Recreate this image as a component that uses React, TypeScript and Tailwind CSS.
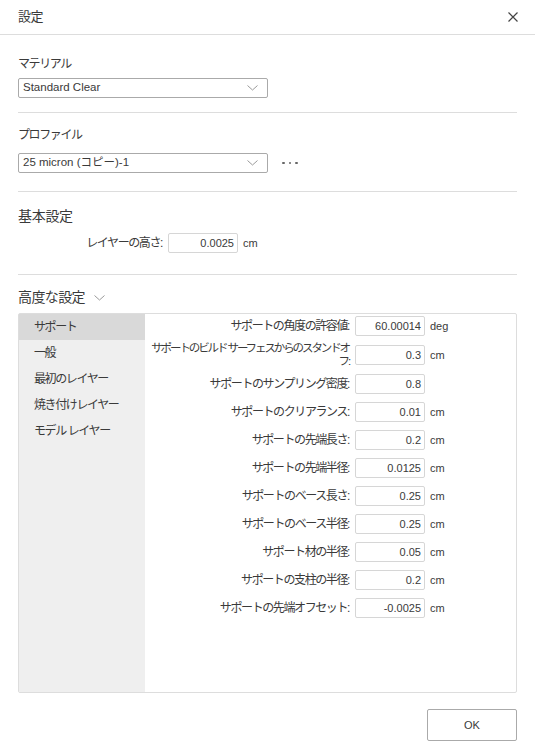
import React from 'react'

const jp = 'text-[12px] tracking-[-1.4px]'

function Chevron({ className = '' }: { className?: string }) {
  return (
    <svg className={className} width="11" height="6" viewBox="0 0 11 6" fill="none">
      <path d="M0.5 0.5 L5.5 5 L10.5 0.5" stroke="#9a9a9a" strokeWidth="1" />
    </svg>
  )
}

function Select({ value }: { value: string }) {
  return (
    <div className="flex h-[20px] w-[250px] items-center justify-between rounded-[2px] border border-[#aaaaaa] bg-white pl-[4px] pr-[9px]">
      <span className="text-[11.5px] leading-none text-[#3a3a3a]">{value}</span>
      <Chevron />
    </div>
  )
}

function NumInput({ value }: { value: string }) {
  return (
    <div className="flex h-[20px] w-[70px] items-center justify-end rounded-[2px] border border-[#d6d6d6] bg-white pr-[3px] text-[11px] text-[#3a3a3a]">
      {value}
    </div>
  )
}

const rows = [
  { label: 'サポートの角度の許容値:', value: '60.00014', unit: 'deg' },
  { label: 'long', value: '0.3', unit: 'cm' },
  { label: 'サポートのサンプリング密度:', value: '0.8', unit: '' },
  { label: 'サポートのクリアランス:', value: '0.01', unit: 'cm' },
  { label: 'サポートの先端長さ:', value: '0.2', unit: 'cm' },
  { label: 'サポートの先端半径:', value: '0.0125', unit: 'cm' },
  { label: 'サポートのベース長さ:', value: '0.25', unit: 'cm' },
  { label: 'サポートのベース半径:', value: '0.25', unit: 'cm' },
  { label: 'サポート材の半径:', value: '0.05', unit: 'cm' },
  { label: 'サポートの支柱の半径:', value: '0.2', unit: 'cm' },
  { label: 'サポートの先端オフセット:', value: '-0.0025', unit: 'cm' },
]

const navItems = ['サポート', '一般', '最初のレイヤー', '焼き付けレイヤー', 'モデル レイヤー']

export default function App() {
  return (
    <div
      className="h-[752px] w-[535px] overflow-hidden bg-white text-[#3a3a3a]"
      style={{ fontFamily: '"Liberation Sans", "Noto Sans CJK JP", sans-serif' }}
    >
      {/* Header */}
      <div className="flex h-[35px] items-center justify-between border-b border-[#dddddd] pl-[18px] pr-[17px]">
        <span className="text-[13px] tracking-[-0.5px]">設定</span>
        <svg width="10" height="10" viewBox="0 0 10 10">
          <path d="M0.5 0.5 L9.5 9.5 M9.5 0.5 L0.5 9.5" stroke="#444" strokeWidth="1.2" />
        </svg>
      </div>

      <div className="px-[18px]">
        {/* Material */}
        <div className="border-b border-[#dddddd] pb-[14px] pt-[21px]">
          <div className={`h-[16px] leading-[16px] ${jp}`}>マテリアル</div>
          <div className="mt-[6px]">
            <Select value="Standard Clear" />
          </div>
        </div>

        {/* Profile */}
        <div className="border-b border-[#dddddd] pb-[18px] pt-[14px]">
          <div className={`h-[16px] leading-[16px] ${jp}`}>プロファイル</div>
          <div className="mt-[10px] flex items-center">
            <Select value="25 micron (コピー)-1" />
            <div className="ml-[14px] flex items-center gap-[4px]">
              <span className="h-[2.5px] w-[2.5px] rounded-full bg-[#666]" />
              <span className="h-[2.5px] w-[2.5px] rounded-full bg-[#666]" />
              <span className="h-[2.5px] w-[2.5px] rounded-full bg-[#666]" />
            </div>
          </div>
        </div>

        {/* Basic */}
        <div className="border-b border-[#dddddd] pb-[21px] pt-[14px]">
          <div className="h-[20px] text-[14px] leading-[20px] tracking-[-0.3px]">基本設定</div>
          <div className="mt-[7px] flex items-center">
            <div className={`w-[144px] text-right ${jp}`}>レイヤーの高さ:</div>
            <div className="ml-[6px]">
              <NumInput value="0.0025" />
            </div>
            <span className="ml-[5px] text-[11px]">cm</span>
          </div>
        </div>

        {/* Advanced */}
        <div className="pt-[12px]">
          <div className="flex h-[20px] items-center">
            <span className="text-[14px] leading-[20px] tracking-[-0.6px]">高度な設定</span>
            <Chevron className="ml-[9px] mt-[1px]" />
          </div>
          <div className="mt-[6px] flex h-[380px] rounded-[2px] border border-[#dddddd]">
            <div className="w-[126px] bg-[#efefef]">
              {navItems.map((item, i) => (
                <div
                  key={item}
                  className={`flex h-[26px] items-center pl-[15px] ${jp} ${i === 0 ? 'bg-[#d9d9d9]' : ''}`}
                >
                  {item}
                </div>
              ))}
            </div>
            <div className="flex-1 pl-[4px] pt-[2px]">
              {rows.map((r, i) => (
                <div
                  key={i}
                  className={`flex h-[20px] items-center ${i === 0 ? '' : i === 1 || i === 2 ? 'mt-[9px]' : 'mt-[8px]'}`}
                >
                  {r.label === 'long' ? (
                    <div className="w-[200px] text-right text-[11.5px] leading-[13px] tracking-[-2.1px]">
                      サポートのビルド サーフェスからのスタンドオ
                      <br />
                      フ:
                    </div>
                  ) : (
                    <div className={`w-[200px] text-right ${jp}`}>{r.label}</div>
                  )}
                  <div className="ml-[6px]">
                    <NumInput value={r.value} />
                  </div>
                  {r.unit && <span className="ml-[5px] text-[11px]">{r.unit}</span>}
                </div>
              ))}
            </div>
          </div>
        </div>

        {/* Footer */}
        <div className="mt-[16px] flex justify-end">
          <button className="h-[32px] w-[90px] rounded-[2px] border border-[#aaaaaa] bg-white text-[11px] text-[#3a3a3a]">
            OK
          </button>
        </div>
      </div>
    </div>
  )
}
